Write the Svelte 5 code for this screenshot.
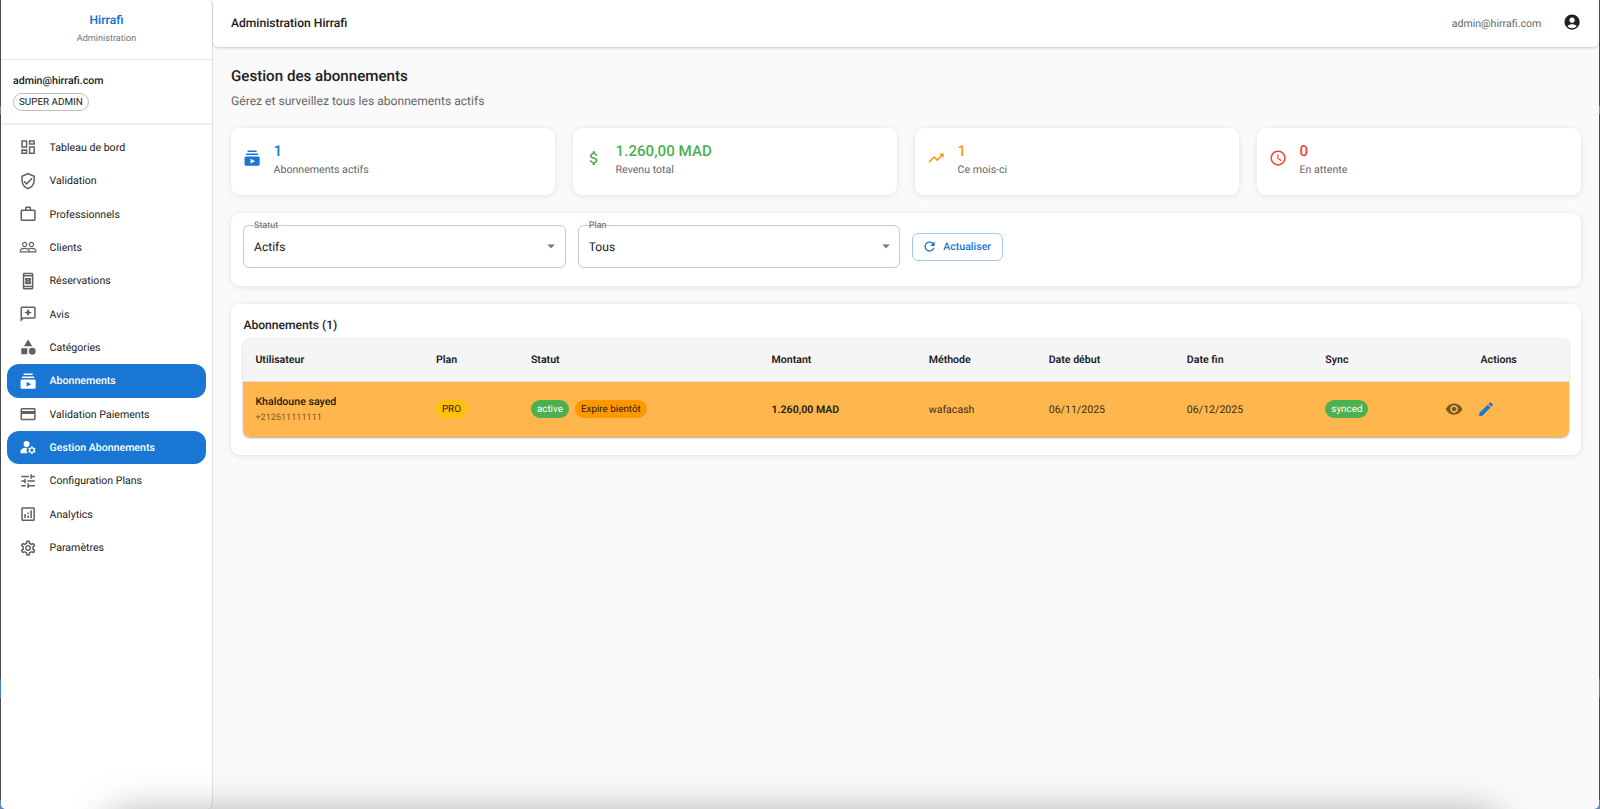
<script lang="ts">
  const icons: Record<string, string> = {
    dashboard: 'M19 5v2h-4V5h4M9 5v6H5V5h4m10 8v6h-4v-6h4M9 17v2H5v-2h4M21 3h-8v6h8V3zM11 3H3v10h8V3zm10 8h-8v10h8V11zm-10 4H3v6h8v-6z',
    verified: 'M12 1 3 5v6c0 5.55 3.84 10.74 9 12 5.16-1.26 9-6.45 9-12V5l-9-4zm7 10c0 4.52-2.98 8.69-7 9.93-4.02-1.24-7-5.41-7-9.93V6.3l7-3.11 7 3.11V11zm-11.59.59L6 13l4 4 8-8-1.41-1.42L10 14.17z',
    work: 'M14 6V4h-4v2h4zM4 8v11h16V8H4zm16-2c1.11 0 2 .89 2 2v11c0 1.11-.89 2-2 2H4c-1.11 0-2-.89-2-2l.01-11c0-1.11.88-2 1.99-2h4V4c0-1.11.89-2 2-2h4c1.11 0 2 .89 2 2v2h4z',
    people: 'M16.5 13c-1.2 0-3.07.34-4.5 1-1.43-.67-3.3-1-4.5-1C5.33 13 1 14.08 1 16.25V19h22v-2.75c0-2.17-4.33-3.25-6.5-3.25zm-4 4.5h-10v-1.25c0-.54 2.56-1.75 5-1.75s5 1.21 5 1.75v1.25zm9 0H14v-1.25c0-.46-.2-.86-.52-1.22.88-.3 1.96-.53 3.02-.53 2.44 0 5 1.21 5 1.75v1.25zM7.5 12c1.93 0 3.5-1.57 3.5-3.5S9.43 5 7.5 5 4 6.57 4 8.5 5.57 12 7.5 12zm0-5.5c1.1 0 2 .9 2 2s-.9 2-2 2-2-.9-2-2 .9-2 2-2zm9 5.5c1.93 0 3.5-1.57 3.5-3.5S18.43 5 16.5 5 13 6.57 13 8.5s1.57 3.5 3.5 3.5zm0-5.5c1.1 0 2 .9 2 2s-.9 2-2 2-2-.9-2-2 .9-2 2-2z',
    booking: 'M17 1H7c-1.1 0-2 .9-2 2v18c0 1.1.9 2 2 2h10c1.1 0 2-.9 2-2V3c0-1.1-.9-2-2-2zM7 4V3h10v1H7zm0 14V6h10v12H7zm0 3v-1h10v1H7zM16 11V9c0-.55-.45-1-1-1H9c-.55 0-1 .45-1 1v2c.55 0 1 .45 1 1s-.45 1-1 1v2c0 .55.45 1 1 1h6c.55 0 1-.45 1-1v-2c-.55 0-1-.45-1-1s.45-1 1-1zm-3.5 3.5h-1v-1h1v1zm0-2h-1v-1h1v1zm0-2h-1v-1h1v1z',
    reviews: 'M20 2H4c-1.1 0-2 .9-2 2v18l4-4h14c1.1 0 2-.9 2-2V4c0-1.1-.9-2-2-2zm0 14H5.17L4 17.17V4h16v12zM12 15l1.57-3.43L17 10l-3.43-1.57L12 5l-1.57 3.43L7 10l3.43 1.57L12 15z',
    category: 'M12 2l-5.5 9h11zM17.5 13a4.5 4.5 0 1 0 0 9 4.5 4.5 0 0 0 0-9zM3 13.5h8v8H3z',
    subscriptions: 'M20 8H4V6h16v2zm-2-6H6v2h12V2zm4 10v8c0 1.1-.9 2-2 2H4c-1.1 0-2-.9-2-2v-8c0-1.1.9-2 2-2h16c1.1 0 2 .9 2 2zm-6 4-6-3.27v6.53L16 16z',
    payment: 'M20 4H4c-1.11 0-1.99.89-1.99 2L2 18c0 1.11.89 2 2 2h16c1.11 0 2-.89 2-2V6c0-1.11-.89-2-2-2zm0 14H4v-6h16v6zm0-10H4V6h16v2z',
    manage: 'M10 4a4 4 0 1 0 0 8 4 4 0 0 0 0-8zM10.67 13.02C10.45 13.01 10.23 13 10 13c-2.42 0-4.68.67-6.61 1.82-.88.52-1.39 1.5-1.39 2.53V20h9.26c-.79-1.13-1.26-2.51-1.26-4 0-1.07.25-2.07.67-2.98zM20.75 16c0-.22-.03-.42-.06-.63l1.14-1.01-1-1.73-1.45.49c-.32-.27-.68-.48-1.08-.63L18 11h-2l-.3 1.49c-.4.15-.76.36-1.08.63l-1.45-.49-1 1.73 1.14 1.01c-.03.21-.06.41-.06.63s.03.42.06.63l-1.14 1.01 1 1.73 1.45-.49c.32.27.68.48 1.08.63L16 21h2l.3-1.49c.4-.15.76-.36 1.08-.63l1.45.49 1-1.73-1.14-1.01c.03-.21.06-.41.06-.63zM17 18c-1.1 0-2-.9-2-2s.9-2 2-2 2 .9 2 2-.9 2-2 2z',
    tune: 'M3 17v2h6v-2H3zM3 5v2h10V5H3zm10 16v-2h8v-2h-8v-2h-2v6h2zM7 9v2H3v2h4v2h2V9H7zm14 4v-2H11v2h10zm-6-4h2V7h4V5h-4V3h-2v6z',
    analytics: 'M19 3H5c-1.1 0-2 .9-2 2v14c0 1.1.9 2 2 2h14c1.1 0 2-.9 2-2V5c0-1.1-.9-2-2-2zm0 16H5V5h14v14zM7 12h2v5H7zM15 7h2v10h-2zM11 14h2v3h-2zM11 10h2v2h-2z',
    settings: 'M19.43 12.98c.04-.32.07-.64.07-.98 0-.34-.03-.66-.07-.98l2.11-1.65c.19-.15.24-.42.12-.64l-2-3.46c-.09-.16-.26-.25-.44-.25-.06 0-.12.01-.17.03l-2.49 1c-.52-.4-1.08-.73-1.69-.98l-.38-2.65C14.46 2.18 14.25 2 14 2h-4c-.25 0-.46.18-.49.42l-.38 2.65c-.61.25-1.17.59-1.69.98l-2.49-1c-.06-.02-.12-.03-.18-.03-.17 0-.34.09-.43.25l-2 3.46c-.13.22-.07.49.12.64l2.11 1.65c-.04.32-.07.65-.07.98 0 .33.03.66.07.98l-2.11 1.65c-.19.15-.24.42-.12.64l2 3.46c.09.16.26.25.44.25.06 0 .12-.01.17-.03l2.49-1c.52.4 1.08.73 1.69.98l.38 2.65c.03.24.24.42.49.42h4c.25 0 .46-.18.49-.42l.38-2.65c.61-.25 1.17-.59 1.69-.98l2.49 1c.06.02.12.03.18.03.17 0 .34-.09.43-.25l2-3.46c.12-.22.07-.49-.12-.64l-2.11-1.65zm-1.98-1.71c.04.31.05.52.05.73 0 .21-.02.43-.05.73l-.14 1.13.89.7 1.08.84-.7 1.21-1.27-.51-1.04-.42-.9.68c-.43.32-.84.56-1.25.73l-1.06.43-.16 1.13-.2 1.35h-1.4l-.19-1.35-.16-1.13-1.06-.43c-.43-.18-.83-.41-1.23-.71l-.91-.7-1.06.43-1.27.51-.7-1.21 1.08-.84.89-.7-.14-1.13c-.03-.31-.05-.54-.05-.74s.02-.43.05-.73l.14-1.13-.89-.7-1.08-.84.7-1.21 1.27.51 1.04.42.9-.68c.43-.32.84-.56 1.25-.73l1.06-.43.16-1.13.2-1.35h1.39l.19 1.35.16 1.13 1.06.43c.43.18.83.41 1.23.71l.91.7 1.06-.43 1.27-.51.7 1.21-1.07.85-.89.7.14 1.13zM12 8c-2.21 0-4 1.79-4 4s1.79 4 4 4 4-1.79 4-4-1.79-4-4-4zm0 6c-1.1 0-2-.9-2-2s.9-2 2-2 2 .9 2 2-.9 2-2 2z',
    money: 'M11.8 10.9c-2.27-.59-3-1.2-3-2.15 0-1.09 1.01-1.85 2.7-1.85 1.78 0 2.44.85 2.5 2.1h2.21c-.07-1.72-1.12-3.3-3.21-3.81V3h-3v2.16c-1.94.42-3.5 1.68-3.5 3.61 0 2.31 1.91 3.46 4.7 4.13 2.5.6 3 1.48 3 2.41 0 .69-.49 1.79-2.7 1.79-2.06 0-2.87-.92-2.98-2.1h-2.2c.12 2.19 1.76 3.42 3.68 3.83V21h3v-2.15c1.95-.37 3.5-1.5 3.5-3.55 0-2.84-2.43-3.81-4.7-4.4z',
    trending: 'm16 6 2.29 2.29-4.88 4.88-4-4L2 16.59 3.41 18l6-6 4 4 6.3-6.29L22 12V6z',
    schedule: 'M11.99 2C6.47 2 2 6.48 2 12s4.47 10 9.99 10C17.52 22 22 17.52 22 12S17.52 2 11.99 2zM12 20c-4.42 0-8-3.58-8-8s3.58-8 8-8 8 3.58 8 8-3.58 8-8 8zM12.5 7H11v6l5.25 3.15.75-1.23-4.5-2.67z',
    refresh: 'M17.65 6.35C16.2 4.9 14.21 4 12 4c-4.42 0-7.99 3.58-7.99 8s3.57 8 7.99 8c3.73 0 6.84-2.55 7.73-6h-2.08c-.82 2.33-3.04 4-5.65 4-3.31 0-6-2.69-6-6s2.69-6 6-6c1.66 0 3.14.69 4.22 1.78L13 11h7V4l-2.35 2.35z',
    account: 'M12 2C6.48 2 2 6.48 2 12s4.48 10 10 10 10-4.48 10-10S17.52 2 12 2zm0 4c1.93 0 3.5 1.57 3.5 3.5S13.93 13 12 13s-3.5-1.57-3.5-3.5S10.07 6 12 6zm0 14c-2.03 0-4.43-.82-6.14-2.88C7.55 15.8 9.68 15 12 15s4.45.8 6.14 2.12C16.43 19.18 14.03 20 12 20z',
    arrow: 'm7 10 5 5 5-5z',
    view: 'M12 4.5C7 4.5 2.73 7.61 1 12c1.73 4.39 6 7.5 11 7.5s9.27-3.11 11-7.5c-1.73-4.39-6-7.5-11-7.5zM12 17c-2.76 0-5-2.24-5-5s2.24-5 5-5 5 2.24 5 5-2.24 5-5 5zm0-8c-1.66 0-3 1.34-3 3s1.34 3 3 3 3-1.34 3-3-1.34-3-3-3z',
    edit: 'M3 17.25V21h3.75L17.81 9.94l-3.75-3.75L3 17.25zM20.71 7.04c.39-.39.39-1.02 0-1.41l-2.34-2.34c-.39-.39-1.02-.39-1.41 0l-1.83 1.83 3.75 3.75 1.83-1.83z'
  };

  const menu = [
    { label: 'Tableau de bord', icon: 'dashboard' },
    { label: 'Validation', icon: 'verified' },
    { label: 'Professionnels', icon: 'work' },
    { label: 'Clients', icon: 'people' },
    { label: 'Réservations', icon: 'booking' },
    { label: 'Avis', icon: 'reviews' },
    { label: 'Catégories', icon: 'category' },
    { label: 'Abonnements', icon: 'subscriptions', active: true },
    { label: 'Validation Paiements', icon: 'payment' },
    { label: 'Gestion Abonnements', icon: 'manage', active: true },
    { label: 'Configuration Plans', icon: 'tune' },
    { label: 'Analytics', icon: 'analytics' },
    { label: 'Paramètres', icon: 'settings' }
  ];

  const stats = [
    { value: '1', label: 'Abonnements actifs', icon: 'subscriptions', tone: 'blue' },
    { value: '1.260,00 MAD', label: 'Revenu total', icon: 'money', tone: 'green' },
    { value: '1', label: 'Ce mois-ci', icon: 'trending', tone: 'orange' },
    { value: '0', label: 'En attente', icon: 'schedule', tone: 'red' }
  ];

  const filters = [
    { label: 'Statut', value: 'Actifs' },
    { label: 'Plan', value: 'Tous' }
  ];

  const columns = ['Utilisateur', 'Plan', 'Statut', 'Montant', 'Méthode', 'Date début', 'Date fin', 'Sync'];
</script>

{#snippet icon(name: string)}
  <svg class="icon" viewBox="0 0 24 24" aria-hidden="true"><path d={icons[name]} /></svg>
{/snippet}

<div class="desktop">
  <div class="window">
    <aside class="sidebar">
      <div class="brand">
        <div class="brand-name">Hirrafi</div>
        <div class="brand-sub">Administration</div>
      </div>
      <div class="user">
        <div class="user-mail">admin@hirrafi.com</div>
        <span class="role">SUPER ADMIN</span>
      </div>
      <nav class="menu">
        {#each menu as item}
          <a class="menu-item" class:active={item.active} href="#top">
            {@render icon(item.icon)}
            <span>{item.label}</span>
          </a>
        {/each}
      </nav>
    </aside>

    <div class="main">
      <header class="appbar">
        <div class="appbar-title">Administration Hirrafi</div>
        <div class="appbar-user">
          <span>admin@hirrafi.com</span>
          {@render icon('account')}
        </div>
      </header>

      <main class="content">
        <h1>Gestion des abonnements</h1>
        <p class="subtitle">Gérez et surveillez tous les abonnements actifs</p>

        <div class="stats">
          {#each stats as stat}
            <div class="card stat {stat.tone}">
              {@render icon(stat.icon)}
              <div>
                <div class="stat-value">{stat.value}</div>
                <div class="stat-label">{stat.label}</div>
              </div>
            </div>
          {/each}
        </div>

        <div class="card filters">
          {#each filters as filter}
            <div class="select">
              <span class="select-label">{filter.label}</span>
              <span>{filter.value}</span>
              {@render icon('arrow')}
            </div>
          {/each}
          <button class="refresh">
            {@render icon('refresh')}
            <span>Actualiser</span>
          </button>
        </div>

        <div class="card list">
          <h2>Abonnements (1)</h2>
          <div class="table">
            <div class="row head">
              {#each columns as column}
                <div class="cell">{column}</div>
              {/each}
              <div class="cell center">Actions</div>
            </div>
            <div class="row body">
              <div class="cell">
                <div class="name">Khaldoune sayed</div>
                <div class="phone">+212611111111</div>
              </div>
              <div class="cell"><span class="chip plan">PRO</span></div>
              <div class="cell chips">
                <span class="chip ok">active</span>
                <span class="chip warn">Expire bientôt</span>
              </div>
              <div class="cell amount">1.260,00 MAD</div>
              <div class="cell">wafacash</div>
              <div class="cell">06/11/2025</div>
              <div class="cell">06/12/2025</div>
              <div class="cell"><span class="chip ok">synced</span></div>
              <div class="cell actions">
                <button class="action" title="Voir">{@render icon('view')}</button>
                <button class="action edit" title="Modifier">{@render icon('edit')}</button>
              </div>
            </div>
          </div>
        </div>
      </main>
    </div>
  </div>
  <div class="dock-shadow"></div>
</div>

<style>
  :global(body) {
    margin: 0;
    overflow: hidden;
  }

  .desktop {
    position: relative;
    box-sizing: border-box;
    width: 1600px;
    height: 809px;
    padding: 0 1px;
    overflow: hidden;
    background: linear-gradient(#4a4a4c 106px, #6c9a64 106px 114px, #4a4a4c 114px 679px, #4a80bd 679px 698px, #4a4a4c 698px 800px, #6685b5 800px);
    font-family: Roboto, sans-serif;
    font-size: 10.6px;
    text-rendering: geometricPrecision;
    color: #212121;
  }

  .desktop * {
    box-sizing: border-box;
  }

  .window {
    display: flex;
    height: 809px;
    background: #fafafa;
    border-radius: 0 0 5px 5px;
    overflow: hidden;
  }

  .icon {
    width: 18.2px;
    height: 18.2px;
    flex: none;
    fill: currentColor;
  }

  .sidebar {
    width: 212px;
    flex: none;
    background: #fff;
    border-right: 1px solid #e0e0e0;
    border-radius: 0 6px 6px 0;
  }

  .brand {
    height: 60px;
    padding-top: 11px;
    border-bottom: 1px solid #e6e6e6;
    text-align: center;
  }

  .brand-name {
    font-size: 12.1px;
    line-height: 18px;
    font-weight: 600;
    color: #1976d2;
  }

  .brand-sub {
    margin-top: 3px;
    font-size: 9.1px;
    line-height: 15px;
    color: #757575;
  }

  .user {
    height: 65px;
    padding: 13px 12px 12px;
    border-bottom: 2px solid #eee;
  }

  .user-mail {
    line-height: 16px;
    font-weight: 500;
  }

  .role {
    display: inline-flex;
    align-items: center;
    height: 18px;
    margin-top: 4px;
    padding: 1px 5px 0;
    border: 1px solid #bdbdbd;
    border-radius: 9px;
    font-size: 9.85px;
  }

  .menu {
    padding: 5.8px 6px 0;
  }

  .menu-item {
    display: flex;
    align-items: center;
    gap: 12.4px;
    height: 33.35px;
    padding-left: 12px;
    border-radius: 12px;
    color: #212121;
    text-decoration: none;
  }

  .menu-item .icon {
    color: #616161;
  }

  .menu-item.active {
    background: #1976d2;
    color: #fff;
    font-weight: 500;
  }

  .menu-item.active .icon {
    color: #fff;
  }

  .main {
    flex: 1;
  }

  .appbar {
    display: flex;
    justify-content: space-between;
    align-items: center;
    height: 47px;
    padding: 0 18px 2px;
    background: #fff;
    border-radius: 0 0 6px 6px;
    box-shadow: 0 1px 3px rgba(0, 0, 0, 0.2);
  }

  .appbar-title {
    font-size: 12.1px;
    font-weight: 500;
  }

  .appbar-user {
    display: flex;
    align-items: center;
    gap: 21.5px;
    color: #666;
  }

  .appbar-user span {
    padding-top: 1.5px;
  }

  .appbar-user .icon {
    color: #212121;
  }

  .content {
    padding: 19px 18px 0;
  }

  h1 {
    margin: 0;
    font-size: 15.15px;
    line-height: 20px;
    font-weight: 500;
  }

  .subtitle {
    margin: 6px 0 17px;
    font-size: 12.1px;
    line-height: 19px;
    color: #666;
  }

  .card {
    background: #fff;
    border-radius: 9px;
    box-shadow: 0 1px 6px rgba(0, 0, 0, 0.1);
  }

  .stats {
    display: grid;
    grid-template-columns: repeat(4, 1fr);
    gap: 18px;
  }

  .stat {
    display: flex;
    gap: 12px;
    height: 67px;
    padding: 12px 12px 12px 12.4px;
  }

  .stat .icon {
    margin-top: 9.2px;
  }

  .stat-value {
    font-size: 15.15px;
    line-height: 22px;
    font-weight: 500;
  }

  .stat-label {
    line-height: 15px;
    color: #666;
  }

  .blue { color: #1976d2; }
  .green { color: #4caf50; }
  .orange { color: #ff9800; }
  .red { color: #f44336; }

  .filters {
    display: flex;
    align-items: flex-start;
    gap: 12px;
    height: 73px;
    margin-top: 18px;
    padding: 12px;
  }

  .select {
    position: relative;
    display: flex;
    align-items: center;
    justify-content: space-between;
    width: 322.7px;
    height: 43px;
    padding: 0 4.5px 0 10px;
    border: 1px solid #c9c9c9;
    border-radius: 6px;
    font-size: 12.1px;
  }

  .select .icon {
    color: #757575;
  }

  .select-label {
    position: absolute;
    top: -6px;
    left: 10px;
    font-size: 9.1px;
    line-height: 12px;
    color: #666;
  }

  .refresh {
    display: flex;
    align-items: center;
    gap: 6px;
    width: 91px;
    height: 28px;
    margin-top: 7.5px;
    padding: 0 0 0 8.6px;
    border: 1px solid #a3c8ed;
    border-radius: 6px;
    background: none;
    font: 500 10.6px Roboto, sans-serif;
    letter-spacing: 0;
    text-rendering: inherit;
    color: #1976d2;
  }

  .refresh .icon {
    width: 15.2px;
    height: 15.2px;
  }

  .list {
    height: 151px;
    margin-top: 18px;
    padding: 12px 12px 12px 12.4px;
  }

  h2 {
    margin: 0;
    font-size: 12.1px;
    line-height: 18px;
    font-weight: 500;
  }

  .table {
    margin-top: 4px;
    border-radius: 7px;
    overflow: hidden;
    box-shadow: 0 1px 2px rgba(0, 0, 0, 0.35);
  }

  .row {
    display: grid;
    grid-template-columns: 180.5px 95px 240.6px 157.2px 120px 138.2px 138.5px 115px 1fr;
    align-items: center;
  }

  .cell {
    padding: 0 12px;
    white-space: nowrap;
  }

  .head {
    height: 43.5px;
    padding-top: 1px;
    background: #f5f5f5;
    border-bottom: 1px solid #e0e0e0;
    font-weight: 600;
  }

  .center {
    text-align: center;
  }

  .body {
    height: 55px;
    background: #ffb74d;
    color: #3a2c18;
  }

  .name {
    line-height: 16px;
    font-weight: 500;
    color: #211a10;
  }

  .phone {
    padding-top: 1px;
    line-height: 14px;
    font-size: 9.1px;
    color: #7a5a2b;
  }

  .amount {
    font-weight: 600;
    color: #211a10;
  }

  .chip {
    display: inline-flex;
    align-items: center;
    height: 18px;
    padding: 0 6px;
    border-radius: 9px;
    font-size: 9.85px;
  }

  .chips {
    display: flex;
    gap: 6px;
  }

  .chip.plan {
    background: #ffc107;
    color: #2b210d;
  }

  .chip.ok {
    background: #4caf50;
    color: #fff;
  }

  .chip.warn {
    background: #ff9800;
    color: #2b210d;
  }

  .actions {
    display: flex;
    gap: 4px;
  }

  .action {
    display: flex;
    align-items: center;
    justify-content: center;
    width: 27.5px;
    height: 27.5px;
    padding: 0;
    border: 0;
    background: none;
    color: #7a5825;
  }

  .action.edit {
    color: #1976d2;
  }

  /* soft shade cast along the lower edge of the window */
  .dock-shadow {
    position: absolute;
    top: 819px;
    left: 114px;
    width: 1378px;
    height: 60px;
    box-shadow: 0 0 40px 4px rgba(0, 0, 0, 0.36);
  }
</style>
